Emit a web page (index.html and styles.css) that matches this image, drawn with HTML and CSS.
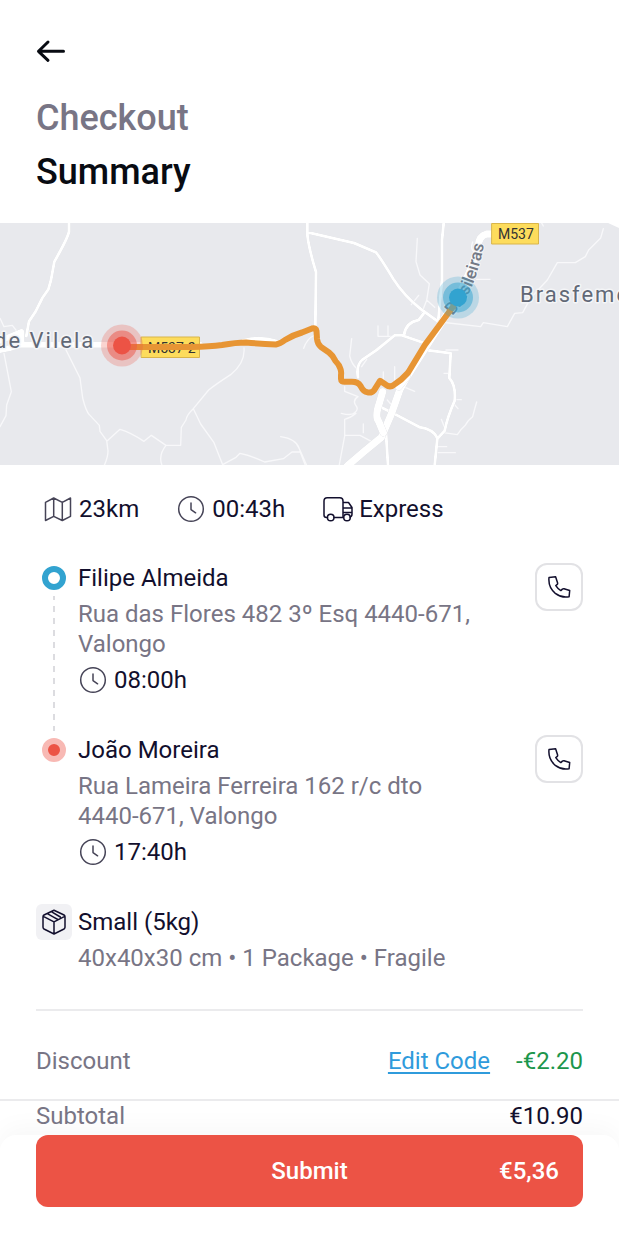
FILE: index.html
```html
<!DOCTYPE html>
<html lang="en">
  <head>
    <meta charset="UTF-8" />
    <meta name="viewport" content="width=device-width, initial-scale=1.0" />
    <title>Checkout Summary</title>
    <link rel="stylesheet" href="styles.css">
  </head>
  <body>
    <svg class="sprite" aria-hidden="true">
      <symbol id="clock" viewBox="0 0 28 28">
        <circle cx="14" cy="14" r="12.3" />
        <path d="M14 8v6.6l4.6 3.2" />
      </symbol>
      <symbol id="phone" viewBox="0 0 24 24">
        <path d="M2 2.500 8.600 1.700l2 6.300q.2 1-.6 1.700L8.800 10.600q2 3.200 5 5l1.600-1.500q.7-.6 1.600-.4l5.700 1.800-.6 6.200Q15 23.300 8.300 18.300 1 12.300 2 2.500z" />
      </symbol>
    </svg>

    <header class="header">
      <button class="back" type="button" aria-label="Back">
        <svg viewBox="0 0 28 28"><path d="M12 5 2.500 14.300l9.500 9M2.500 14.300H27.500" /></svg>
      </button>
      <h1 class="title"><span>Checkout</span> Summary</h1>
    </header>

    <svg class="map" viewBox="0 0 619 242" role="img" aria-label="Route map">
      <svg viewBox="0 0 1857 726" width="619" height="242">
        <!-- west side -->
        <g transform="translate(0 -9)">
          <g class="lane">
            <path d="M0 295l12 25 25-4 14 18M12 400l22 115-14 40-2 32-18 33M198 390l42 84 8 60q10 40 20 50l30 32 2 18 20 28 4 30q0 20-12 46M322 662l38-34q30 8 72 36l22-18 44 30h44l2-54 14-22q2-16 22-34l46-56q20-16 66-46 44-36 40-80M498 676q-24 30-12 60M580 566l22 46 40 56 26 66M668 734l40-22 12-12q32 6 74 26l56-10 26-20h26M842 650q46 6 56 36l22 50" />
          </g>
          <path class="road thin" d="M207 0v35q-4 20-44 90l-10 55-8 28-18 26-20 40-20 30-8 44" />
          <path class="road wide" d="M0 390q30-4 60-16H600M0 362l64-26v36M730 366q50-14 100 2" />
        </g>
        <!-- east side -->
        <g transform="translate(900 -9)">
          <g class="lane">
            <path d="M352 55l-4 70 12 40 28 26-8 50-14 36M380 240l24 22M334 254l22-28M234 318v31h56M264 318v28M155 356l-6 52q6 26 24 40M185 440l15-22M518 66q-8 22 4 28M530 178h40M420 306l122 14 8-12 72 12 22-40 24-2 24-44 50-54 30-52h54l30-18 10-20 36-36 8-28M720 0l10 18M438 390h36M432 460h16M466 539h18M462 552l12 14M424 598l8 20M530 546q-6 20-12 44-16 12-22 26-14 12-24 28l-42-6M410 680h30M406 698h60M134 500v14l40 16q-16 10-8 24 12 14-2 24-8 10-40 2M134 598q18-4 34-18M134 598v50l-16 86M134 646h46l34 18M190 612v26M284 440v40M250 456v34M262 540l20 24M310 500l34 14M0 694l16 42M45 345q-24 10-34 40" />
          </g>
          <path class="road thin" d="M22 0v44q4 40 26 112l-2 164M22 37l140 32 66 28q16 20 52 80 32 50 82 90l50 36M432 0l-6 60v120l-12 130M370 282l-14 18q-40 8-44 46M376 370l-70-24h-22l-54 44-44 30q-18 16-12 52M378 390l74 10-4 74q20 22 16 68-22 50-30 90l-22 24-8 80M412 654q-12-26-52-32l-76-40-40-20M258 640l6 96" />
          <path class="road main" d="M580 42h-20q-24 6-26 38-10 50-60 150L334 450q-20 30-34 58l-26 74-30 70q-50 40-100 84l-20 20" />
          <path class="road main" d="M248 515l-10 35q-14 40-2 54l14 34M320 470l-24 30" />
          <path class="field" d="M905 0l60 28V0z" />
        </g>
      </svg>

      <g class="plate">
        <rect x="141.500" y="114" width="58" height="20.500" />
        <text x="148" y="130">M537-2</text>
        <rect x="492" y=".500" width="46.500" height="20.500" />
        <text x="498" y="16">M537</text>
      </g>
      <g class="place">
        <text x="-6" y="125">de Vilela</text>
        <text x="520" y="79">Brasfemes</text>
      </g>
      <path id="street" fill="none" d="M452 93q14-14 21-32t12-44" />
      <text class="street"><textPath href="#street">Brasileiras</textPath></text>

      <path class="route" d="M122 124h70q18-.3 30-2 14-2.500 24-2.500 16 1.500 30 2 4-.5 9-4.500 8-5 17-7.500l10-4q4-1 4.500 2.500l.5 8q.5 5 4 8l8 5.500q4 3 6.500 8.500 4 4 5 8 1 3 .5 6v4q0 3 4 2.800h7q6 0 8.500 4 3 6 7 6.500 4 1 6.500-2l6-9.500 6 4q4 3 8 0 8-5 14-12l17-28 28-38" />

      <g class="pin pin-red">
        <circle cx="122" cy="122.500" r="21" />
        <circle cx="122" cy="122.500" r="15" />
        <circle cx="122" cy="122.500" r="9" />
      </g>
      <g class="pin pin-blue">
        <circle cx="458" cy="74.500" r="21" />
        <circle cx="458" cy="74.500" r="15" />
        <circle cx="458" cy="74.500" r="9" />
      </g>
    </svg>

    <main class="content">
      <ul class="facts">
        <li>
          <svg class="icon soft" viewBox="0 0 28 28"><path d="M1.500 7.300 9.700 3l8.600 4.300L26.500 3v18.300l-8.200 4.200-8.600-4.200-8.200 4.200zM9.700 3v18.300M18.300 7.300v18.200" /></svg>
          23km
        </li>
        <li><svg class="icon soft"><use href="#clock" /></svg>00:43h</li>
        <li>
          <svg class="icon truck" viewBox="0 0 30 28">
            <path d="M4.500 22.500H3.500Q1 22.500 1 20V6q0-3.200 3.200-3.200h12.600Q20 2.800 20 6v15.500M11 22.500h9.500M20 7.500h5.500L29 12.500v6.500q0 2.500-2 3M20 13h9M20 17.500h9" />
            <circle cx="7.700" cy="22.500" r="3.300" />
            <circle cx="24" cy="22.500" r="3.300" />
          </svg>
          Express
        </li>
      </ul>

      <ol class="stops">
        <li class="stop">
          <div class="rail">
            <span class="dot pickup"></span>
            <span class="dashes"></span>
          </div>
          <div class="details">
            <h2>Filipe Almeida</h2>
            <p>Rua das Flores 482 3º Esq <span class="postcode">4440-671,</span> Valongo</p>
            <div class="time"><svg class="icon soft"><use href="#clock" /></svg>08:00h</div>
          </div>
          <button class="call" type="button" aria-label="Call Filipe Almeida"><svg><use href="#phone" /></svg></button>
        </li>
        <li class="stop">
          <div class="rail"><span class="dot dropoff"></span></div>
          <div class="details">
            <h2>João Moreira</h2>
            <p>Rua Lameira Ferreira 162 r/c dto <span class="postcode">4440-671,</span> Valongo</p>
            <div class="time"><svg class="icon soft"><use href="#clock" /></svg>17:40h</div>
          </div>
          <button class="call" type="button" aria-label="Call João Moreira"><svg><use href="#phone" /></svg></button>
        </li>
      </ol>

      <section class="package">
        <div class="box">
          <svg viewBox="0 0 24 26"><path d="M12 1.200 22 6q1 .6 1 1.700v10.600q0 1.100-1 1.700l-10 5-10-5q-1-.6-1-1.700V7.700Q1 6.600 2 6zM1.300 7.300 12 12.800l10.700-5.500M12 12.800V25M5.300 4.700l6.700 3.600 3.800 2.200M9.300 2.700l9 5.300" /></svg>
        </div>
        <div class="details">
          <h2>Small (5kg)</h2>
          <p>40x40x30 cm • 1 Package • Fragile</p>
        </div>
      </section>

      <div class="row discount">
        <span class="label">Discount</span>
        <a href="#">Edit Code</a>
        <span class="saving">-€2.20</span>
      </div>
    </main>

    <footer class="footer">
      <div class="row">
        <span class="label">Subtotal</span>
        <span>€10.90</span>
      </div>
      <div class="bar">
        <button class="submit" type="submit">
          <span class="action">Submit</span>
          <span class="price">€5,36</span>
        </button>
      </div>
    </footer>
  </body>
</html>
```
FILE: styles.css
```css
* {
  box-sizing: border-box;
}

body {
  margin: 0;
  background: #fff;
  color: #120f2d;
  font-family: Roboto, sans-serif;
  font-size: 24px;
  line-height: 30px;
}

h1,
h2,
p,
ul,
ol {
  margin: 0;
  padding: 0;
  list-style: none;
}

button {
  font: inherit;
  cursor: pointer;
}

svg {
  display: block;
  fill: none;
  stroke-linecap: round;
  stroke-linejoin: round;
}

.sprite {
  position: absolute;
  width: 0;
  height: 0;
}

/* header */
.header {
  padding: 37px 36px 24px;
}

.back {
  display: block;
  padding: 0;
  border: 0;
  background: none;
}

.back svg {
  width: 28px;
  height: 28px;
  stroke: #080b12;
  stroke-width: 3;
  overflow: visible;
}

.title {
  margin-top: 26px;
  color: #080b12;
  font-size: 36px;
  font-weight: 500;
  line-height: 54px;
}

.title span {
  display: block;
  color: #787585;
}

/* map */
.map {
  width: 100%;
  background: #e8e9ed;
}

.road {
  stroke: #fff;
  stroke-width: 12;
  filter: drop-shadow(0 0 2px #c9cbd1);
}

.road.thin {
  stroke-width: 9;
}

.road.wide {
  stroke-width: 18;
}

.road.main {
  stroke-width: 22;
}

.lane {
  stroke: #f8f8fa;
  stroke-width: 4;
}

.field {
  fill: #fff;
}

.plate rect {
  fill: #fddc5c;
  stroke: #d9b54a;
  stroke-width: 1;
}

.plate text {
  fill: #333;
  font-size: 14px;
}

.place text {
  fill: #616876;
  stroke: #f4f5f7;
  stroke-width: 3;
  paint-order: stroke;
  font-size: 22px;
  letter-spacing: 2px;
}

.street {
  fill: #737985;
  stroke: #f4f5f7;
  stroke-width: 2;
  paint-order: stroke;
  font-size: 17px;
  font-weight: 500;
}

.route {
  stroke: #e79534;
  stroke-width: 6;
}

.pin circle {
  opacity: 0.25;
}

.pin circle:nth-child(2) {
  opacity: 0.5;
}

.pin circle:last-child {
  opacity: 1;
}

.pin-red {
  fill: #ec5345;
}

.pin-blue {
  fill: #32a3d0;
}

/* trip */
.content {
  padding: 29px 36px 0;
}

.icon {
  flex: none;
  width: 28px;
  height: 28px;
  stroke: #120f2d;
  stroke-width: 1.5;
}

.icon.soft {
  stroke: #464457;
}

.icon.truck {
  width: 30px;
}

.facts {
  display: flex;
  gap: 38px;
  padding-left: 8px;
}

.facts li,
.time {
  display: flex;
  align-items: center;
  gap: 7px;
}

.facts li:last-child {
  gap: 6px;
}

.stops {
  margin-top: 39px;
}

.stop,
.package {
  display: grid;
  grid-template-columns: 36px 1fr 48px;
  column-gap: 6px;
}

.stop {
  padding-bottom: 40px;
}

.rail {
  display: flex;
  flex-direction: column;
  align-items: center;
  gap: 6px;
  margin-bottom: -36px;
  padding-top: 3px;
}

.dot {
  flex: none;
  width: 24px;
  height: 24px;
  border-radius: 50%;
}

.pickup {
  border: 6px solid #32a3d0;
}

.dropoff {
  border: 6px solid #f8b9b4;
  background: #ec5345;
}

.dashes {
  flex: 1;
  width: 2px;
  background: repeating-linear-gradient(#dcdce0 0 4px, transparent 4px 10px, #dcdce0 10px 12px);
}

.details {
  display: flex;
  flex-direction: column;
  gap: 6px;
}

.details h2 {
  font-size: 24px;
  font-weight: 400;
  line-height: 30px;
}

.details p,
.label {
  color: #787585;
}

.postcode {
  white-space: nowrap;
}

.time {
  padding-left: 1px;
}

.call {
  display: grid;
  place-items: center;
  width: 48px;
  height: 48px;
  padding: 0;
  border: 2px solid #e2e2e5;
  border-radius: 12px;
  background: #fff;
}

.call svg {
  width: 24px;
  height: 24px;
  stroke: #120f2d;
  stroke-width: 1.5;
}

/* package */
.package {
  padding-bottom: 36px;
  border-bottom: 2px solid #ebebed;
}

.box {
  display: grid;
  place-items: center;
  height: 36px;
  margin-top: -3px;
  border-radius: 6px;
  background: #f1f1f4;
}

.box svg {
  width: 24px;
  height: 26px;
  stroke: #120f2d;
  stroke-width: 1.5;
}

/* totals */
.row {
  display: flex;
}

.label {
  flex: 1;
}

.discount {
  gap: 26px;
  padding: 35px 0 23px;
}

.discount a {
  color: #2f9bdc;
  text-decoration-thickness: 2px;
  text-underline-offset: 3px;
}

.saving {
  color: #1c964c;
}

.footer {
  border-top: 2px solid #ebebed;
}

.footer .row {
  padding: 0 36px 4px;
}

.bar {
  padding: 0 36px 37px;
  border-radius: 16px 16px 0 0;
  background: #fff;
  box-shadow: 0 -8px 24px rgba(0, 0, 0, 0.03);
}

.submit {
  display: grid;
  grid-template-columns: 1fr auto 1fr;
  align-items: center;
  width: 100%;
  height: 72px;
  padding: 0 24px;
  border: 0;
  border-radius: 12px;
  background: #ec5345;
  color: #fff;
  font-weight: 500;
}

.action {
  grid-column: 2;
}

.price {
  justify-self: end;
}
```
